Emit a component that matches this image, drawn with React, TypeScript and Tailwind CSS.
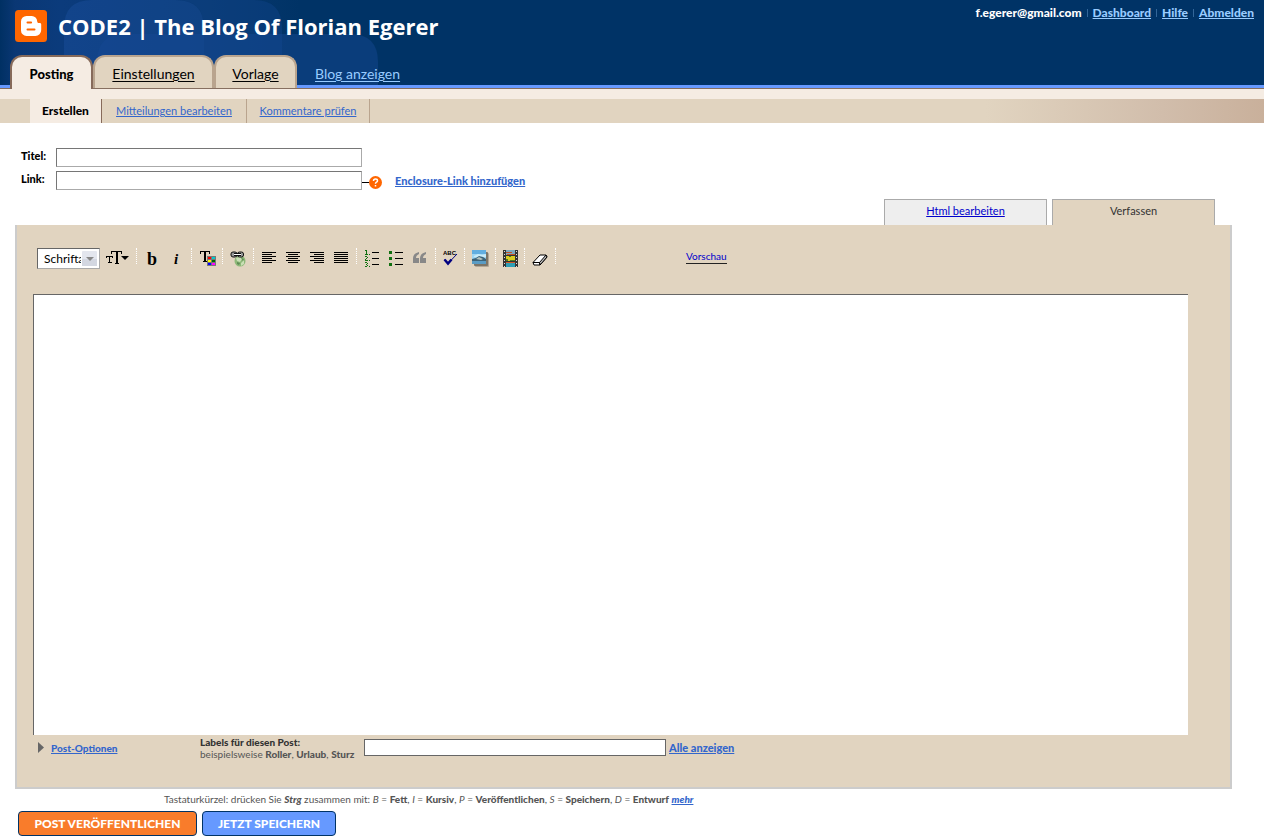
import type { ReactNode } from "react";

const font = "font-['Lato','Liberation_Sans',sans-serif]";

function HeaderBackdrop() {
  return (
    <svg className="absolute left-0 top-0" width="400" height="85" aria-hidden="true">
      <defs>
        <linearGradient id="glow" x1="0" x2="1" y1="0" y2="0">
          <stop offset="0" stopColor="#003063" />
          <stop offset="0.05" stopColor="#0a3774" />
          <stop offset="0.2" stopColor="#0b3b7c" />
          <stop offset="0.7" stopColor="#08386f" />
          <stop offset="1" stopColor="#003366" />
        </linearGradient>
      </defs>
      <rect width="300" height="85" fill="url(#glow)" />
      <path d="M64 85V28Q64 0 92 0H176Q204 0 204 28V85Z" fill="#1b4f9e" opacity="0.45" />
      <path d="M176 0H254Q282 0 282 28V85H204V28Q204 0 176 0Z" fill="#0e4285" opacity="0.5" />
      <path d="M97 85V62Q97 34 125 34H350Q378 34 378 62V85Z" fill="#164a94" opacity="0.45" />
    </svg>
  );
}

function Logo() {
  return (
    <svg width="32" height="32" viewBox="0 0 32 32" aria-label="Blogger" role="img">
      <rect width="32" height="32" rx="3.5" fill="#f60" />
      <path
        d="M11.5 6h5.3a5.4 5.4 0 0 1 5.4 5.2c0 1.2.5 1.8 1.7 1.8h.8c1 0 1.5.6 1.5 1.5v5.6A5.8 5.8 0 0 1 20.4 26h-8.9A5.6 5.6 0 0 1 6 20.4v-8.9A5.5 5.5 0 0 1 11.5 6Z"
        fill="#fff"
      />
      <path d="M12.5 12.5h3.6M12.5 19.5h7" stroke="#f60" strokeWidth="2" strokeLinecap="round" />
    </svg>
  );
}

function Tool({ label, narrow, children }: { label: string; narrow?: boolean; children: ReactNode }) {
  return (
    <button
      type="button"
      title={label}
      aria-label={label}
      className={`flex h-6 items-center justify-center ${narrow ? "w-[22px]" : "w-6"}`}
    >
      {children}
    </button>
  );
}

function Sep() {
  return <span className="mx-[3px] mb-1 h-4 border-l border-dotted border-white" />;
}

function Lines({ rows }: { rows: [number, number][] }) {
  return (
    <svg width="14" height="12" shapeRendering="crispEdges">
      {rows.map(([x, w], i) => (
        <rect key={i} x={x} y={i * 2} width={w} height="1" fill="#000" />
      ))}
    </svg>
  );
}

const alignments: { label: string; rows: [number, number][] }[] = [
  { label: "Linksbündig", rows: [[0, 14], [0, 10], [0, 14], [0, 10], [0, 14], [0, 10]] },
  { label: "Zentriert", rows: [[0, 14], [2, 10], [0, 14], [2, 10], [0, 14], [2, 10]] },
  { label: "Rechtsbündig", rows: [[0, 14], [4, 10], [0, 14], [4, 10], [0, 14], [4, 10]] },
  { label: "Blocksatz", rows: [[0, 14], [0, 14], [0, 14], [0, 14], [0, 14], [0, 14]] },
];

function Toolbar() {
  return (
    <div className="flex h-[26px] items-center">
      <div className="relative mr-[5px]">
        <select
          aria-label="Schriftart"
          className="block h-[21px] w-[63px] appearance-none border border-[#666] border-b-[#aaa] border-r-[#aaa] bg-white pl-1.5 pr-[18px] text-[12px] leading-[19px] text-black"
        >
          <option>Schriftart</option>
        </select>
        <svg className="pointer-events-none absolute right-[3px] top-[3px]" width="15" height="15">
          <rect width="15" height="15" rx="1" fill="#e3e6ee" />
          <rect y="8" width="15" height="7" fill="#d3d7e1" />
          <path d="M4 6h8l-4 4z" fill="#888" />
        </svg>
      </div>
      <button type="button" aria-label="Schriftgröße" title="Schriftgröße" className="flex h-6 w-[28px] items-center">
        <svg width="26" height="16">
          <g stroke="#000" fill="none" shapeRendering="crispEdges">
            <path d="M1 6.500h7M1.500 6v2M7.500 6v2M4.500 6v7M3 12.500h4" />
            <path d="M6 1.500h11M6.500 1v3M16.500 1v3M10 13.500h4" />
            <path d="M12 1v13" strokeWidth="2" />
          </g>
          <path d="M16 6h8l-4 4z" fill="#000" />
        </svg>
      </button>
      <Sep />
      <Tool label="Fett">
        <span className="pt-0.5 font-['Liberation_Serif',serif] text-[18px] font-black leading-none">b</span>
      </Tool>
      <Tool label="Kursiv">
        <span className="pt-0.5 font-['Liberation_Serif',serif] text-[15px] font-bold italic leading-none">i</span>
      </Tool>
      <Sep />
      <Tool label="Textfarbe">
        <svg width="17" height="17" shapeRendering="crispEdges">
          <path d="M1 1.500h10M1.500 1v3M10.500 1v3M4 11.500h4" stroke="#000" />
          <path d="M6 1v11" stroke="#000" strokeWidth="2" />
          <rect x="8" y="6" width="9" height="10" fill="#777" />
          <path d="M9 7h3v2H9z" fill="red" />
          <path d="M13 7h3v2h-3z" fill="#0cc" />
          <path d="M9 10h3v2H9z" fill="#ff0" />
          <path d="M13 10h3v2h-3z" fill="#060" />
          <path d="M9 13h3v2H9z" fill="#00f" />
          <path d="M13 13h3v2h-3z" fill="#f0f" />
        </svg>
      </Tool>
      <Sep />
      <Tool label="Link">
        <svg width="17" height="17">
          <circle cx="10" cy="11" r="5.500" fill="#8db878" />
          <path d="M6 8l4-1 2 2-2 3-3-1zM11 13l3-3v4l-3 2z" fill="#c9dfb5" />
          <path d="M7 12l3 1-1 2-2-1zM11 8l3 1-1 2z" fill="#5f8b55" />
          <g fill="none" stroke="#111">
            <rect x="1" y="2" width="6" height="5" rx="2" fill="#999" />
            <rect x="7.500" y="2" width="6" height="5" rx="2" fill="#999" />
            <path d="M4 3.500h7M4 5.500h7" />
            <path d="M4 4.500h7" stroke="#fff" />
          </g>
        </svg>
      </Tool>
      <Sep />
      {alignments.map((a) => (
        <Tool key={a.label} label={a.label}>
          <Lines rows={a.rows} />
        </Tool>
      ))}
      <Sep />
      <Tool label="Nummerierte Liste">
        <svg width="16" height="18">
          <g stroke="#107010" fill="none" shapeRendering="crispEdges">
            <path d="M1 1.500h1M2.500 1v4M1 5.500h3M5 5.500h1" />
            <path d="M1 7.500h2M3.500 8v1M2.500 9v1M1.500 10v1M1 11.500h3M5 11.500h1" />
            <path d="M1 13.500h2M3.500 14v1M2 15.500h1M3.500 16v1M1 17.500h2M5 17.500h1" />
          </g>
          <path d="M8 3.500h7M8 9.500h7M8 15.500h7" stroke="#000" shapeRendering="crispEdges" />
        </svg>
      </Tool>
      <Tool label="Aufzählung">
        <svg width="14" height="16" shapeRendering="crispEdges">
          <path d="M0 1h3v3H0zM0 7h3v3H0zM0 13h3v3H0z" fill="#107010" />
          <path d="M6 2.500h8M6 8.500h8M6 14.500h8" stroke="#000" />
        </svg>
      </Tool>
      <Tool label="Zitat">
        <svg width="14" height="12" fill="#888">
          <path d="M6 0C2 1 0 3 0 7v4h6V6H3c0-2 1-3 3-4zM13 0C9 1 7 3 7 7v4h6V6h-3c0-2 1-3 3-4z" />
        </svg>
      </Tool>
      <Sep />
      <Tool label="Rechtschreibung prüfen" narrow>
        <svg width="15" height="18">
          <text x="0" y="6" fontFamily="Liberation Sans, sans-serif" fontWeight="700" fontSize="6" fill="#000">
            ABC
          </text>
          <path d="M1.500 10.500L5 14.500L14 5" fill="none" stroke="#000080" strokeWidth="1" />
          <path d="M1.500 10.500L5 14.500L8.500 10.500" fill="none" stroke="#000080" strokeWidth="2.500" />
        </svg>
      </Tool>
      <Sep />
      <Tool label="Bild hinzufügen">
        <svg width="18" height="18">
          <rect x="4" y="4" width="14" height="14" rx="1" fill="#b3a795" />
          <rect x="3" y="3" width="14" height="14" rx="1" fill="#7d7567" />
          <rect x="1" y="1" width="14" height="14" fill="#9fd6f3" />
          <path d="M1 1h14v4H1z" fill="#62aee0" />
          <path d="M3 7l4-2 4 1 4-1v3H3z" fill="#c8ebf9" />
          <path d="M1 10l4-1 3-2 4 1 3 2v2H1z" fill="#3c6378" />
          <path d="M5 10l3-2 4 2-2 1z" fill="#b5c2be" />
          <path d="M1 12h14v3H1z" fill="#5a9cc4" />
        </svg>
      </Tool>
      <Sep />
      <Tool label="Video hinzufügen" narrow>
        <svg width="15" height="17" shapeRendering="crispEdges">
          <path d="M0 0h15v17H0z" fill="#333" />
          <path d="M3 0h9v5H3z" fill="#7ba7bd" />
          <path d="M3 2h6v1H3zM4 4h8v1H4z" fill="#c34f22" />
          <path d="M3 6h9v5H3z" fill="#d8cc20" />
          <path d="M3 9h2v2H3zM7 10h5v1H7zM6 6h2v1H6z" fill="#4c7a22" />
          <path d="M3 12h9v5H3z" fill="#2d9eb6" />
          <path d="M3 12h9v1H3z" fill="#d55728" />
          <path d="M1.500 1v16M13.500 1v16" stroke="#ddd" strokeDasharray="1 2" />
        </svg>
      </Tool>
      <Sep />
      <Tool label="Formatierung entfernen">
        <svg width="16" height="14" className="mt-1">
          <path d="M1 9.500L8 2h6l1 2-7 8H2z" fill="#fff" stroke="#000" strokeLinejoin="round" />
          <path d="M8 12L15 4l-1-2-6.500 7.500z" fill="#bbb" stroke="#000" strokeLinejoin="round" />
          <path d="M1 9.500h6.500l.5 2.500" fill="none" stroke="#000" />
        </svg>
      </Tool>
      <Sep />
      <button type="button" className="mb-1 ml-[127px] border-b border-[#222] text-[10px] leading-[14px] text-[#00c]">
        Vorschau
      </button>
    </div>
  );
}

const link = "font-black text-[#36c] underline";

export default function App() {
  return (
    <div className={`${font} bg-white text-black`}>
      <header className="relative bg-[#036]">
        <HeaderBackdrop />
        <div className="relative flex h-[55px] justify-between pl-[15px] pr-[10px]">
          <div className="flex items-start gap-[11px] pt-[10px]">
            <Logo />
            <h1 className="font-['Open_Sans',sans-serif] text-[22px] font-bold leading-[32px] text-white">
              CODE2 | The Blog Of Florian Egerer
            </h1>
          </div>
          <div className="flex items-center self-start pt-[5px] text-[12px] font-black leading-4 text-[#9cf]">
            <strong className="font-black text-white">f.egerer@gmail.com</strong>
            <span className="mx-[5px] h-2 border-l border-[#369]" />
            <a href="#dashboard" className="underline">Dashboard</a>
            <span className="mx-[5px] h-2 border-l border-[#369]" />
            <a href="#hilfe" className="underline">Hilfe</a>
            <span className="mx-[5px] h-2 border-l border-[#369]" />
            <a href="#abmelden" className="underline">Abmelden</a>
          </div>
        </div>
        <nav className="relative flex h-[34px] pl-[10px] text-[14px] leading-[34px]">
          <div className="absolute inset-x-0 bottom-0 h-1 border-b border-[#866f60] bg-[#69f]" />
          <a
            href="#posting"
            className="relative flex w-[83px] justify-center rounded-t-[12px] border-2 border-b-0 border-[#866a5a] bg-[#f5ece3] text-[13px] font-black"
          >
            Posting
          </a>
          <a
            href="#einstellungen"
            className="relative mb-px flex w-[121px] justify-center rounded-t-[12px] border-2 border-b-0 border-[#b9a48e] bg-[#e1d4c0] underline underline-offset-2"
          >
            Einstellungen
          </a>
          <a
            href="#vorlage"
            className="relative mb-px flex w-[83px] justify-center rounded-t-[12px] border-2 border-b-0 border-[#b9a48e] bg-[#e1d4c0] underline underline-offset-2"
          >
            Vorlage
          </a>
          <a href="#blog" className="relative ml-[18px] pt-[2px] text-[#9cf] underline underline-offset-2">
            Blog anzeigen
          </a>
        </nav>
      </header>

      <nav className="border-t-[10px] border-[#f5ece3] bg-[#e1d4c0] bg-[linear-gradient(to_right,#e1d4c0_78%,#d1bdab_92%,#c9b09b)] pl-[30px] text-[11px] leading-6">
        <div className="flex h-6">
          <a
            href="#erstellen"
            className="flex w-[72px] justify-center border-r border-[#866a5a] bg-[#f5ece3] text-[12px] font-black"
          >
            Erstellen
          </a>
          <a href="#mitteilungen" className="w-[145px] border-r border-[#b9a48e] text-center text-[#36c] underline">
            Mitteilungen bearbeiten
          </a>
          <a href="#kommentare" className="w-[123px] border-r border-[#b9a48e] text-center text-[#36c] underline">
            Kommentare prüfen
          </a>
        </div>
      </nav>

      <main>
        <form>
          <div className="flex items-start justify-between">
            <div className="pl-[21px] pt-[25px] text-[11px] leading-4">
              <div className="mb-1 flex">
                <label htmlFor="titel" className="w-[35px] font-black">Titel:</label>
                <input id="titel" className="h-[19px] w-[306px] border border-[#767676] border-b-[#aaa] border-r-[#aaa] px-1" />
              </div>
              <div className="flex">
                <label htmlFor="link" className="w-[35px] font-black">Link:</label>
                <input id="link" className="h-[19px] w-[306px] border border-[#767676] border-b-[#aaa] border-r-[#aaa] px-1" />
                <svg className="mt-[5px]" width="21" height="14" aria-label="Hilfe" role="img">
                  <path d="M0 6.500h7" stroke="#000" />
                  <circle cx="13.500" cy="6.500" r="6.500" fill="#f60" />
                  <path d="M11.500 5q0-2 2-2t2 1.700q0 1-1 1.500t-1 1.500M13.500 9v1.500" fill="none" stroke="#fff" strokeWidth="1.500" />
                </svg>
                <a href="#enclosure" className={`ml-3 pt-0.5 ${link}`}>Enclosure-Link hinzufügen</a>
              </div>
            </div>
            <div className="mr-[49px] mt-[76px] flex gap-[5px] text-center text-[11px] leading-[22px]">
              <a href="#html" className="h-[26px] w-[163px] border border-b-0 border-[#aaa] bg-[#eee] text-[#00c] underline">
                Html bearbeiten
              </a>
              <a href="#verfassen" className="h-[26px] w-[163px] border border-b-0 border-[#aaa] bg-[#e1d4c0] text-[#333]">
                Verfassen
              </a>
            </div>
          </div>

          <section className="ml-[15px] mr-8 border-2 border-t-0 border-[#ccc] bg-[#e1d4c0] pb-[27px] pl-4 pr-[42px] pt-5">
            <div className="pb-[23px] pl-1">
              <Toolbar />
            </div>
            <textarea
              aria-label="Beitrag"
              className="block h-[441px] w-full resize-none border-l border-t border-[#666] bg-white p-2 text-[13px]"
            />
            <div className="flex h-[25px] items-center pl-[5px] text-[10px] leading-[12px]">
              <svg width="6" height="11">
                <path d="M0 0v11l6-5.500z" fill="#666" />
              </svg>
              <div className="w-[156px] pl-[7px]">
                <a href="#optionen" className={link}>Post-Optionen</a>
              </div>
              <label htmlFor="labels" className="w-[164px] whitespace-nowrap text-[#555]">
                <span className="block font-black text-[#333]">Labels für diesen Post:</span>
                <span className="block">
                  beispielsweise <b className="font-black">Roller</b>, <b className="font-black">Urlaub</b>,{" "}
                  <b className="font-black">Sturz</b>
                </span>
              </label>
              <input id="labels" className="h-[17px] w-[302px] border border-[#666] bg-white px-1" />
              <a href="#alle" className={`ml-[3px] text-[11px] ${link}`}>Alle anzeigen</a>
            </div>
          </section>

          <p className="pl-[164px] pt-[3px] text-[10px] leading-[14px] text-[#555]">
            Tastaturkürzel: drücken Sie <b className="font-black italic">Strg</b> zusammen mit: <i>B</i> ={" "}
            <b className="font-black">Fett</b>, <i>I</i> = <b className="font-black">Kursiv</b>, <i>P</i> ={" "}
            <b className="font-black">Veröffentlichen</b>, <i>S</i> = <b className="font-black">Speichern</b>, <i>D</i> ={" "}
            <b className="font-black">Entwurf</b>{" "}
            <a href="#mehr" className="font-black italic text-[#36c] underline">mehr</a>
          </p>

          <div className="flex gap-[5px] pl-[18px] pt-[5px] text-[12px] font-black text-white">
            <button type="submit" className="h-[25px] w-[179px] rounded-[4px] border border-[#036] bg-[#f97c2b]">
              POST VERÖFFENTLICHEN
            </button>
            <button type="button" className="h-[25px] w-[134px] rounded-[4px] border border-[#036] bg-[#69f]">
              JETZT SPEICHERN
            </button>
          </div>
        </form>
      </main>
    </div>
  );
}
